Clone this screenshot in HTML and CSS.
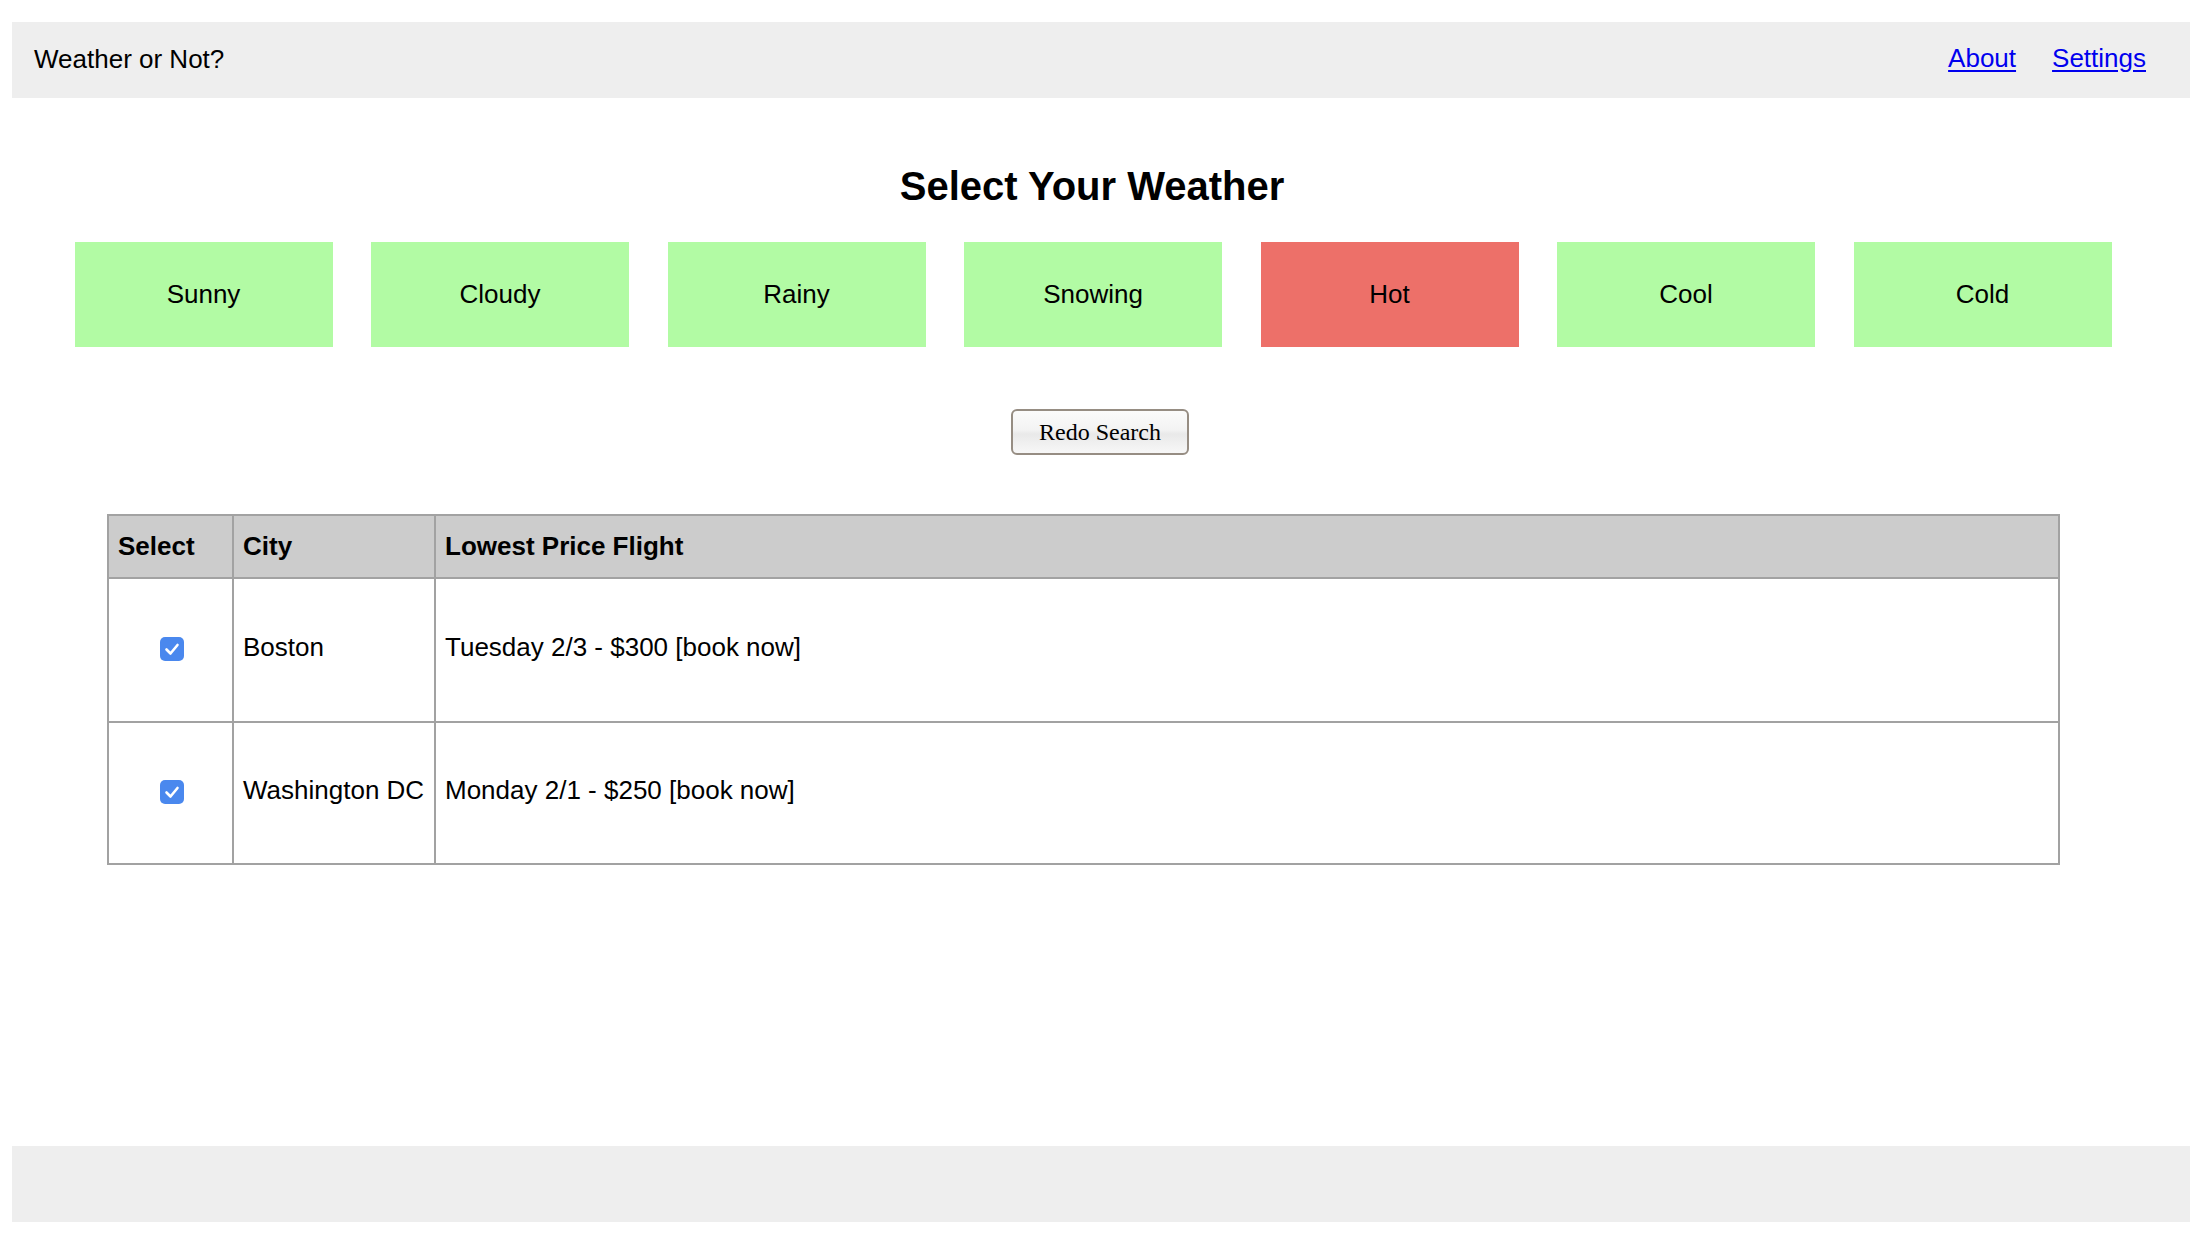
FILE: index.html
```html
<!DOCTYPE html>
<html lang="en">
<head>
<meta charset="utf-8">
<title>Weather or Not?</title>
<link rel="stylesheet" href="styles.css">
</head>
<body>
<div class="page">
  <header class="topbar">
    <div class="brand">Weather or Not?</div>
    <nav class="nav">
      <a href="#">About</a>
      <a href="#">Settings</a>
    </nav>
  </header>

  <main class="main">
    <h1 class="heading">Select Your Weather</h1>
    <div class="choices">
      <div class="choice">Sunny</div>
      <div class="choice">Cloudy</div>
      <div class="choice">Rainy</div>
      <div class="choice">Snowing</div>
      <div class="choice choice-active">Hot</div>
      <div class="choice">Cool</div>
      <div class="choice">Cold</div>
    </div>

    <div class="redo-wrap">
      <button class="redo" type="button">Redo Search</button>
    </div>

    <table class="results">
      <colgroup>
        <col class="col-select">
        <col class="col-city">
        <col class="col-flight">
      </colgroup>
      <thead>
        <tr class="head-row">
          <th>Select</th>
          <th>City</th>
          <th>Lowest Price Flight</th>
        </tr>
      </thead>
      <tbody>
        <tr class="row-1">
          <td class="cell-check"><span class="check"><svg viewBox="0 0 24 24" width="24" height="24"><path d="M6.5 12.5 L10.5 16.5 L17.5 8" fill="none" stroke="#fff" stroke-width="2.6" stroke-linecap="round" stroke-linejoin="round"/></svg></span></td>
          <td>Boston</td>
          <td>Tuesday 2/3 - $300 [book now]</td>
        </tr>
        <tr class="row-2">
          <td class="cell-check"><span class="check"><svg viewBox="0 0 24 24" width="24" height="24"><path d="M6.5 12.5 L10.5 16.5 L17.5 8" fill="none" stroke="#fff" stroke-width="2.6" stroke-linecap="round" stroke-linejoin="round"/></svg></span></td>
          <td>Washington DC</td>
          <td>Monday 2/1 - $250 [book now]</td>
        </tr>
      </tbody>
    </table>
  </main>

  <footer class="footer"></footer>
</div>
</body>
</html>
```

FILE: styles.css
```css
html, body {
  margin: 0;
  padding: 0;
  background: #ffffff;
}

body {
  font-family: "Liberation Sans", Arial, Helvetica, sans-serif;
  color: #000;
}

.page {
  box-sizing: border-box;
  height: 1252px;
  padding: 22px 14px 30px 12px;
  display: flex;
  flex-direction: column;
}

.topbar {
  height: 76px;
  flex: 0 0 76px;
  background: #eeeeee;
  display: flex;
  align-items: center;
  justify-content: space-between;
  padding: 0 44px 0 22px;
  font-size: 26px;
}

.brand {
  margin-top: -2px;
}

.nav {
  display: flex;
  gap: 36px;
  margin-top: -3px;
}

.nav a {
  color: #0000ee;
  text-decoration: underline;
  text-underline-offset: 3px;
}

.main {
  flex: 1;
}

.heading {
  margin: 65px 0 0 0;
  padding-right: 18px;
  font-size: 40px;
  line-height: 46px;
  font-weight: bold;
  text-align: center;
}

.choices {
  display: flex;
  gap: 38.5px;
  margin-top: 33px;
  padding-left: 62.5px;
}

.choice {
  width: 258px;
  height: 105px;
  flex: 0 0 258px;
  background: #b2fba4;
  display: flex;
  align-items: center;
  justify-content: center;
  font-size: 26px;
}

.choice-active {
  background: #ed7069;
}

.redo-wrap {
  display: flex;
  justify-content: center;
  margin-top: 62px;
  padding-right: 2px;
}

.redo {
  box-sizing: border-box;
  width: 178px;
  height: 46px;
  font-family: "Liberation Serif", "Times New Roman", serif;
  font-size: 24px;
  color: #000;
  border: 2px solid #968d83;
  border-radius: 6px;
  background: linear-gradient(#fbfbfb 0%, #f3f3f3 45%, #e9e9e9 55%, #f7f7f7 100%);
  padding: 0;
}

.results {
  margin-top: 59px;
  margin-left: 95px;
  width: 1953px;
  border-collapse: collapse;
  font-size: 26px;
  table-layout: fixed;
}

.col-select { width: 125px; }
.col-city { width: 202px; }

.results th,
.results td {
  border: 2px solid #a2a2a2;
  padding: 0 9px;
  text-align: left;
  vertical-align: middle;
}

.results td {
  padding-bottom: 5px;
}

.results th {
  background: #cccccc;
  font-weight: bold;
}

.head-row { height: 63px; }
.row-1 { height: 144px; }
.row-2 { height: 142px; }

.results td.cell-check {
  text-align: center;
  padding: 0 0 5px 0;
}

.check {
  display: inline-block;
  width: 24px;
  height: 24px;
  border-radius: 5px;
  background: #4a88ee;
  vertical-align: middle;
  margin-left: 3px;
}

.check svg {
  display: block;
}

.footer {
  height: 76px;
  flex: 0 0 76px;
  background: #eeeeee;
}
```
